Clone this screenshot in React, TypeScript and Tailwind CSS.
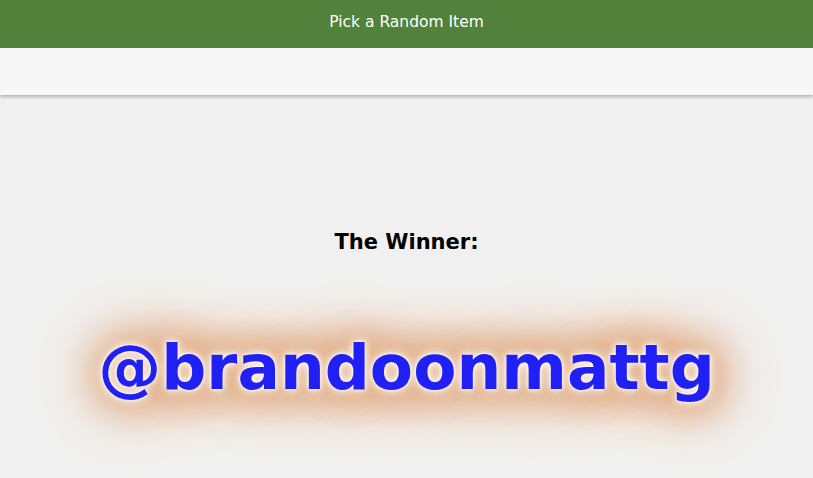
export default function App() {
  return (
    <div className="min-h-[478px] w-full bg-[#f0f0f0] overflow-hidden" style={{ fontFamily: '"DejaVu Sans", Verdana, sans-serif' }}>
      <div className="h-12 bg-[#51813a] flex items-center justify-center">
        <span className="text-white text-[15.5px] leading-none -mt-[2px]">Pick a Random Item</span>
      </div>
      <div className="h-[47px] bg-[#f7f7f7] shadow-[0_2px_3px_rgba(0,0,0,0.25)] relative z-10"></div>
      <div className="flex flex-col items-center">
        <div className="mt-[137px] text-[21px] font-bold text-black leading-none">The Winner:</div>
        <div className="mt-[83px] text-[63px] font-bold leading-none text-[#2020f5] [text-shadow:0_0_3px_#fff,0_0_7px_#fff,0_0_14px_#fbf0e6,0_0_34px_#dc9a68,0_0_40px_#dc9a68,0_0_50px_#dc9a68,0_0_60px_#e0a478,0_0_80px_#e8b890]">
          @brandoonmattg
        </div>
      </div>
    </div>
  );
}
